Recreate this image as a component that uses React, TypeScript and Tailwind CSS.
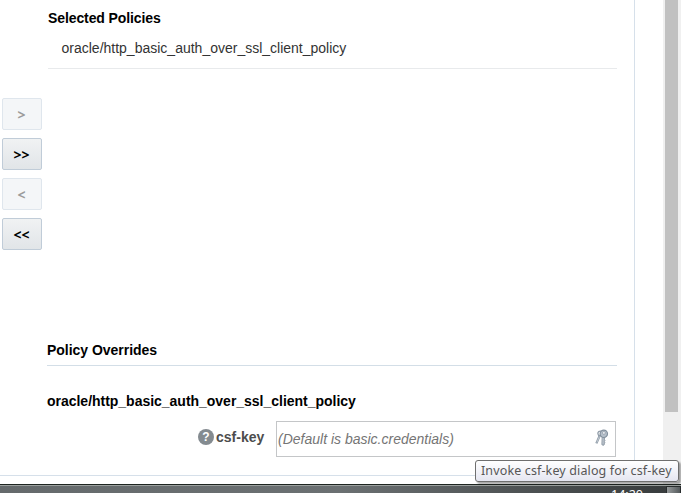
import React from "react";

const arial = "font-['Liberation_Sans',Arial,sans-serif]";

function ShuttleButton({ label, disabled = false }: { label: string; disabled?: boolean }) {
  return (
    <button
      disabled={disabled}
      className={
        "flex h-8 w-10 items-center justify-center rounded-[2px] border pr-px pt-px font-['Open_Sans',sans-serif] text-[14px] font-bold leading-none " +
        (disabled
          ? "border-[#dfe6ed] bg-[#f4f6f8] text-[#9b9b9b]"
          : "border-[#c0ccd8] bg-linear-to-b from-[#f0f2f3] to-[#e1e5e8] text-black")
      }
    >
      {label}
    </button>
  );
}

function KeysIcon() {
  return (
    <svg width="14" height="18" viewBox="0 0 14 18" fill="none">
      <path d="M5 6 1.4 14.4" stroke="#8f9ba7" strokeWidth="2.3" />
      <path d="M4.9 6.4 1.8 13.6" stroke="#c6ced6" strokeWidth="0.9" />
      <path d="M6.6 2.2C4.2 1.6 2.7 3 2.9 4.8c.1 1.3 1 2.2 2.3 2.4" stroke="#8f9ba7" strokeWidth="1.3" />
      <path d="m7.2 7-.3 8.4 1.2 1.2 1.2-1.2V14l.6-.7-.6-.8.7-.8-.6-.8V7Z" fill="#a4afba" stroke="#7c8995" strokeWidth="0.8" />
      <path d="M8 8v7.2" stroke="#cad1d8" strokeWidth="0.8" />
      <circle cx="8.8" cy="4.8" r="3.7" fill="#b6c0ca" stroke="#84919e" strokeWidth="1.2" />
      <circle cx="8.9" cy="3.9" r="1.4" fill="#f6f8fa" stroke="#7f8c99" strokeWidth="0.6" />
    </svg>
  );
}

export default function App() {
  return (
    <div className={"relative flex h-[493px] w-[681px] flex-col overflow-hidden bg-white " + arial}>
      <div className="flex h-[484px] shrink-0">
        <main className="flex h-[476px] w-[635px] shrink-0 border-b border-r border-[#d6e0ea] pl-[2px]">
          <div className="flex w-[45px] shrink-0 flex-col gap-2 pt-[98px]">
            <ShuttleButton label=">" disabled />
            <ShuttleButton label=">>" />
            <ShuttleButton label="<" disabled />
            <ShuttleButton label="<<" />
          </div>
          <div className="w-[570px]">
            <section className="h-[340px]">
              <h2 className="pl-px pt-[10px] text-[14px] font-bold leading-4 tracking-[-0.1px] text-black">
                Selected Policies
              </h2>
              <div className="ml-px mt-[12px] h-[31px] border-b border-[#e8eaec] pl-[13.5px] pt-[2px] text-[14px] leading-4 text-[#333]">
                oracle/http_basic_auth_over_ssl_client_policy
              </div>
            </section>
            <section>
              <h2 className="h-[26px] border-b border-[#d3dee7] pt-[2px] text-[14px] font-bold leading-4 tracking-[-0.03px] text-black">
                Policy Overrides
              </h2>
              <h3 className="mt-[27px] text-[14px] font-bold leading-4 tracking-[-0.02px] text-black">
                oracle/http_basic_auth_over_ssl_client_policy
              </h3>
              <div className="mr-px mt-3 flex h-9 pl-[151px]">
                <div className="flex w-[78px] items-start gap-[2px] pt-2">
                  <span className="flex h-4 w-4 items-center justify-center rounded-full bg-[#848b90] text-[12px] font-bold leading-none text-white">
                    ?
                  </span>
                  <label className="text-[14px] font-bold leading-4 text-[#4d4d4d]">csf-key</label>
                </div>
                <div className="flex flex-1 items-center justify-between border border-[#c4c6c8] pl-px pr-[6px]">
                  <span className="text-[14px] italic leading-4 text-[#757575]">(Default is basic.credentials)</span>
                  <span className="-mt-[2px]">
                    <KeysIcon />
                  </span>
                </div>
              </div>
            </section>
          </div>
        </main>
        <div className="ml-[28px] h-full w-[18px] shrink-0 bg-[#f0f0f0] pl-[2px]">
          <div className="h-[412px] w-[13px] bg-[#c1c1c1]" />
        </div>
      </div>
      <footer className="flex h-[9px] shrink-0 justify-end overflow-hidden border-t border-[#1d2420] bg-linear-to-r from-[#656a6c] via-[#6b7072] via-50% to-[#363a3b]">
        <div className="flex h-full w-full justify-end border-t border-[#9ba09e]">
          <span className="mr-[23px] pt-px font-['Noto_Sans',sans-serif] text-[12.5px] leading-4 text-white">14:20</span>
          <span className="h-4 w-[15px] shrink-0 border border-[#292d2e] bg-linear-to-r from-[#969a9b] to-[#555a5c]" />
        </div>
      </footer>
      <div className="absolute left-[475px] top-[460px] flex h-[22px] w-[204px] items-center whitespace-nowrap rounded-[3px] border border-[#6f6f6f] bg-linear-to-b from-white to-[#e5e6f1] pl-[5px] font-['Noto_Sans',sans-serif] text-[12.5px] tracking-[0.13px] text-[#575757] shadow-[2px_2px_2px_rgba(0,0,0,0.35)]">
        Invoke csf-key dialog for csf-key
      </div>
    </div>
  );
}
